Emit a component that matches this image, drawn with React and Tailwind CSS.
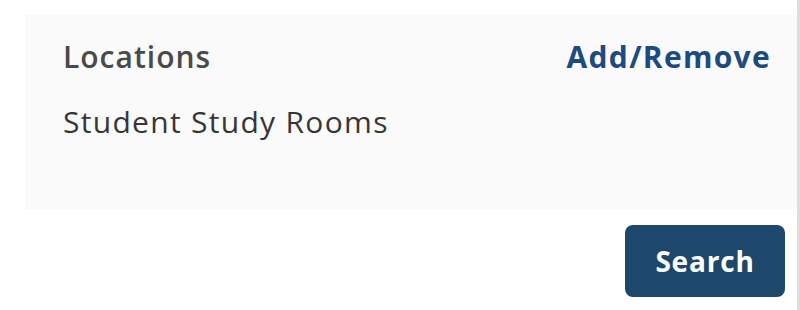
export default function App() {
  return (
    <div className="w-[800px] h-[310px] bg-white flex" style={{ fontFamily: '"Open Sans", sans-serif' }}>
      <div className="w-[797px] h-full pt-[15px] pl-[25px] flex flex-col">
        <div className="bg-[#fafafa] h-[194px] pl-[38px] pr-[26px] pt-[22px] flex flex-col">
          <div className="flex justify-between items-baseline">
            <span className="text-[30px] leading-[40px] font-semibold tracking-[1px] text-[#4a4a4a]">Locations</span>
            <a className="text-[30px] leading-[40px] font-bold tracking-[1.3px] text-[#1f4a80]">Add/Remove</a>
          </div>
          <div className="mt-[25px] text-[30px] leading-[40px] tracking-[1.3px] text-[#363636]">Student Study Rooms</div>
        </div>
        <div className="flex justify-end pr-[12px] pt-[16px]">
          <button className="w-[160px] h-[72px] rounded-[8px] bg-[#1e486b] text-white text-[28px] font-bold tracking-[0.8px]">Search</button>
        </div>
      </div>
      <div className="w-[3px] h-full bg-[#dddddd]"></div>
    </div>
  );
}
